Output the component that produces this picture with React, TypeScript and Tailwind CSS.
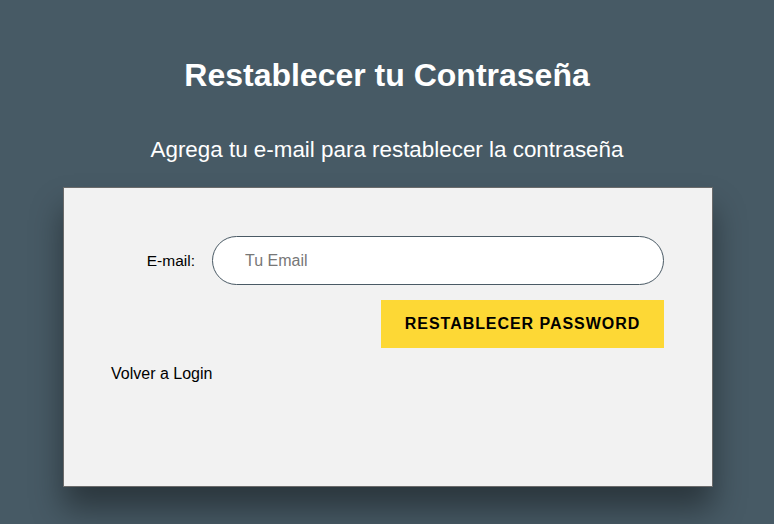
export default function App() {
  return (
    <div className="min-h-[524px] w-full bg-[#475a65] font-['Liberation_Sans',Arial,sans-serif] flex flex-col items-center">
      <h1 className="mt-[57px] text-[32px] font-bold text-white leading-[36px]">Restablecer tu Contraseña</h1>
      <p className="mt-[44px] text-[22.4px] text-white leading-[26px]">Agrega tu e-mail para restablecer la contraseña</p>
      <div className="mt-[24px] ml-[2px] w-[650px] h-[300px] bg-[#f2f2f2] border border-[#6b6b6b] shadow-[0_22px_30px_rgba(0,0,0,0.4)] pt-[48px] pl-[47px] pr-[48px]">
        <div className="flex items-center justify-end">
          <label className="text-[15.5px] text-black mr-[17px]">E-mail:</label>
          <input
            placeholder="Tu Email"
            className="w-[452px] h-[49px] rounded-full border border-[#4a5a65] bg-white pl-[32px] text-[16px] placeholder:text-[#777] outline-none"
          />
        </div>
        <div className="flex justify-end mt-[15px]">
          <button className="w-[283px] h-[48px] bg-[#fdd835] text-black font-bold text-[16px] tracking-[0.95px]">RESTABLECER PASSWORD</button>
        </div>
        <div className="mt-[14px] text-[16px] text-black">Volver a Login</div>
      </div>
    </div>
  );
}
